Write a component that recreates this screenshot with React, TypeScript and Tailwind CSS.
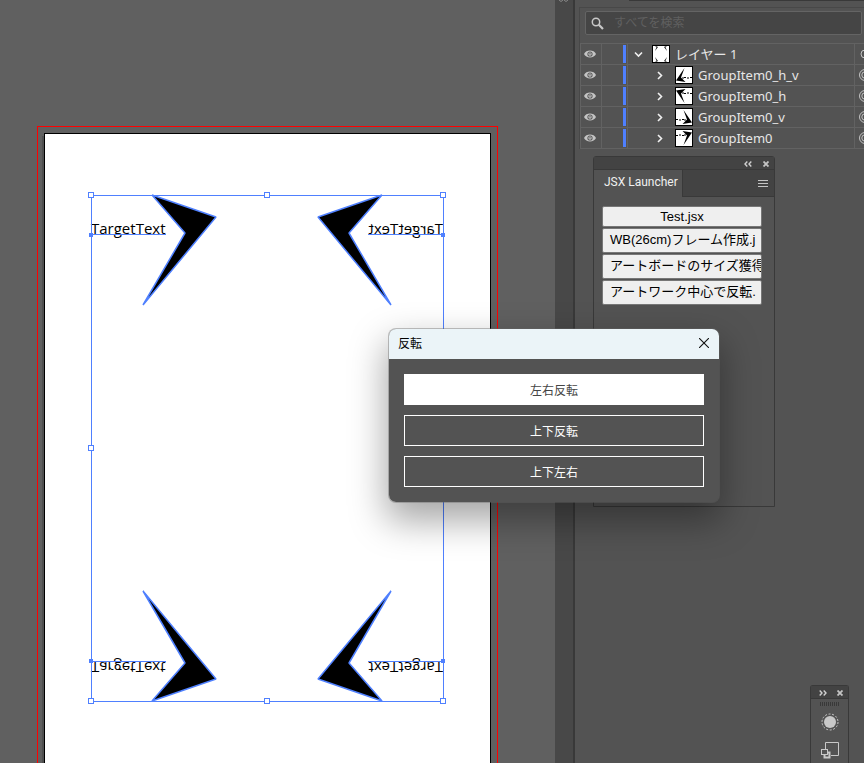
import React from "react";

const BLUE = "#4f80ff";
const ARROW = "152,195 216,217 143,305 185,233";

const orientations = [
  { id: "GroupItem0", transform: "matrix(1 0 0 1 0 0)" },
  { id: "GroupItem0_h", transform: "matrix(-1 0 0 1 534 0)" },
  { id: "GroupItem0_v", transform: "matrix(1 0 0 -1 0 896)" },
  { id: "GroupItem0_h_v", transform: "matrix(-1 0 0 -1 534 896)" },
];

const handles = [
  [91, 195], [267, 195], [443, 195],
  [91, 448], [443, 448],
  [91, 701], [267, 701], [443, 701],
];

function Artboard() {
  return (
    <svg width="554" height="900" className="block shrink-0" aria-label="Artboard">
      <rect x="37.5" y="126.5" width="460" height="900" fill="none" stroke="#ff0000" />
      <rect x="42" y="136" width="2" height="800" fill="#505050" />
      <rect x="44.5" y="133.5" width="446" height="900" fill="#fff" stroke="#000" />
      {orientations.map((o) => (
        <g key={o.id} transform={o.transform}>
          <polygon points={ARROW} fill="#000" stroke={BLUE} strokeWidth="1.500" strokeLinejoin="bevel" />
          <text x="91" y="234" fontSize="15" fill="#000" className="font-['Open_Sans',sans-serif]">
            TargetText
          </text>
          <rect x="91" y="234" width="75" height="1" fill={BLUE} />
          <rect x="89" y="233" width="4" height="4" fill={BLUE} />
        </g>
      ))}
      <rect x="91.5" y="195.5" width="352" height="506" fill="none" stroke={BLUE} />
      {handles.map(([x, y]) => (
        <rect key={`${x}-${y}`} x={x - 2.5} y={y - 2.5} width="5" height="5" fill="#fff" stroke={BLUE} />
      ))}
    </svg>
  );
}

function EyeIcon() {
  return (
    <svg width="12" height="8" viewBox="0 0 12 8">
      <path d="M0 4C2-.6 10-.6 12 4 10 8.600 2 8.600 0 4Z" fill="#c4c4c4" />
      <circle cx="6" cy="4" r="2.600" fill="#535353" />
      <circle cx="6" cy="4" r="1.700" fill="#c4c4c4" />
      <path d="M6 2.500v2" stroke="#535353" strokeWidth="1" />
    </svg>
  );
}

function Chevron({ open }: { open?: boolean }) {
  return (
    <svg width="9" height="9" viewBox="0 0 9 9" fill="none" stroke="#f0f0f0" strokeWidth="1.600">
      <path d={open ? "M1 2.500 4.500 6 8 2.500" : "M3 1 6.500 4.500 3 8"} />
    </svg>
  );
}

function Thumb({ kind }: { kind: string }) {
  const flips: Record<string, string> = {
    h_v: "matrix(-1 0 0 -1 18 18)",
    h: "matrix(-1 0 0 1 18 0)",
    v: "matrix(1 0 0 -1 0 18)",
    none: "matrix(1 0 0 1 0 0)",
  };
  return (
    <svg width="18" height="18" viewBox="0 0 18 18" className="shrink-0">
      <rect x=".5" y=".5" width="17" height="17" fill="#fff" stroke="#000" />
      {kind === "layer" ? (
        <path
          d="M3 1h1l2 1-3 4 1.500-4ZM15 1h-1l-2 1 3 4-1.500-4ZM3 17h1l2-1-3-4 1.500 4ZM15 17h-1l-2-1 3-4-1.500 4Z"
          fill="#222"
        />
      ) : (
        <g transform={flips[kind]}>
          <path d="M7.500 2 17 3.500 8.500 16 12 6.500Z" fill="#000" />
          <path d="M1 6.500h2M4 6h2M7 6.500h2M9 6h2" stroke="#000" strokeWidth="1" />
        </g>
      )}
    </svg>
  );
}

const layers = [
  { name: "レイヤー 1", kind: "layer" },
  { name: "GroupItem0_h_v", kind: "h_v" },
  { name: "GroupItem0_h", kind: "h" },
  { name: "GroupItem0_v", kind: "v" },
  { name: "GroupItem0", kind: "none" },
];

function LayerRow({ name, kind }: { name: string; kind: string }) {
  const top = kind === "layer";
  return (
    <li className="flex h-[21px] border-b border-[#626262]">
      <button aria-label={`${name} visibility`} className="flex w-5 shrink-0 justify-center pt-[6px] pr-[3px]">
        <EyeIcon />
      </button>
      <span className="flex w-[27px] shrink-0 justify-end border-x border-[#626262]">
        <span className="my-px mr-px w-[3px] bg-[#4f80ff]" />
      </span>
      <div className={`flex min-w-0 flex-1 items-center ${top ? "pl-[6px]" : "pl-[27px]"}`}>
        <button aria-label={`${name} toggle`} className="shrink-0">
          <Chevron open={top} />
        </button>
        <span className={`flex items-center gap-[5px] ${top ? "pl-[9px]" : "pl-[11px]"}`}>
          <Thumb kind={kind} />
          <span className="text-[13px] leading-5 whitespace-nowrap text-[#e6e6e6]">{name}</span>
        </span>
      </div>
      <button aria-label={`${name} target`} className="flex w-[10px] shrink-0 items-center overflow-hidden border-l border-[#626262] pl-[4px]">
        <svg width="12" height="12" viewBox="0 0 12 12" fill="none" stroke="#c4c4c4" className="shrink-0">
          <circle cx="6" cy="6" r={top ? 4 : 5.500} />
          {!top && <circle cx="6" cy="6" r="3.200" />}
        </svg>
      </button>
    </li>
  );
}

function DoubleChevron({ right }: { right?: boolean }) {
  return (
    <svg width="8" height="6" viewBox="0 0 8 6" fill="none" stroke="#d0d0d0" strokeWidth="1.400">
      <path d={right ? "M.7.5 3 3 .7 5.500M4.700.5 7 3 4.700 5.500" : "M7.300.5 5 3 7.300 5.500M3.300.5 1 3 3.300 5.500"} />
    </svg>
  );
}

function SmallCross() {
  return (
    <svg width="6" height="6" viewBox="0 0 6 6" stroke="#c4c4c4" strokeWidth="1.800">
      <path d="M.5.5l5 5M5.500.5l-5 5" />
    </svg>
  );
}

const scripts = ["WB(26cm)フレーム作成.j", "アートボードのサイズ獲得", "アートワーク中心で反転."];

function Launcher() {
  return (
    <section className="absolute top-[156px] left-[18px] h-[351px] w-[182px] rounded-t-[3px] border border-[#393939] bg-[#535353]">
      <header className="flex h-[13px] items-center justify-end gap-[11px] border-b border-[#393939] bg-[#434343] pt-px pr-[5px]">
        <button aria-label="Collapse"><DoubleChevron /></button>
        <button aria-label="Close panel"><SmallCross /></button>
      </header>
      <div className="flex h-[27px] items-stretch bg-[#434343]">
        <h2 className="w-[89px] border-r border-[#393939] bg-[#535353] pl-[10px] font-['Roboto',sans-serif] text-[12px] leading-6 whitespace-nowrap text-[#f0f0f0]">
          JSX Launcher
        </h2>
        <button aria-label="Panel menu" className="flex flex-1 items-center justify-end border-b border-[#393939] pr-[6px]">
          <svg width="10" height="7" stroke="#c4c4c4">
            <path d="M0 .5h10M0 3.500h10M0 6.500h10" />
          </svg>
        </button>
      </div>
      <div className="flex flex-col gap-px px-2 pt-[9px] pr-3 font-['Liberation_Sans','Noto_Sans_CJK_JP',sans-serif] text-[13px] text-black">
        <button className="h-[21px] w-40 rounded-[2px] border border-[#777] bg-[#efefef] leading-[19px]">Test.jsx</button>
        {scripts.map((s) => (
          <button
            key={s}
            className="flex h-[25px] w-40 items-start overflow-hidden rounded-[2px] border border-[#777] bg-[#efefef] pl-[7px] leading-[21px] whitespace-nowrap"
          >
            {s}
          </button>
        ))}
      </div>
    </section>
  );
}

function ToolDock() {
  return (
    <aside className="absolute right-[15px] bottom-0 h-[78px] w-[39px] rounded-t-[3px] border border-b-0 border-[#393939] bg-[#535353]">
      <header className="flex h-[13px] items-center justify-end gap-[10px] border-b border-[#393939] bg-[#434343] pt-px pr-[5px]">
        <button aria-label="Expand"><DoubleChevron right /></button>
        <button aria-label="Close dock"><SmallCross /></button>
      </header>
      <div className="flex flex-col items-center pl-px">
        <svg width="20" height="10" className="block" shapeRendering="crispEdges">
          <path d="M0 5h20" stroke="#393939" strokeWidth="4" strokeDasharray="1 1" />
        </svg>
        <button aria-label="Appearance" className="pt-[4px]">
          <svg width="18" height="18" viewBox="0 0 18 18" className="block">
            <circle cx="9" cy="9" r="6" fill="#c8c8c8" />
            <circle cx="9" cy="9" r="8" fill="none" stroke="#c8c8c8" strokeWidth="1" strokeDasharray="2 1.600" />
          </svg>
        </button>
        <button aria-label="Asset export" className="pt-[11px]">
          <svg width="18" height="18" viewBox="0 0 18 18" fill="none" stroke="#c8c8c8" className="block">
            <path d="M4.500 7V.5h13v13H10" />
            <rect x="3.500" y="10.500" width="5" height="5" strokeWidth="2" />
            <rect x=".5" y="7.500" width="6" height="5" fill="#535353" />
          </svg>
        </button>
      </div>
    </aside>
  );
}

function FlipDialog() {
  return (
    <div
      role="dialog"
      aria-label="反転"
      className="absolute top-[328px] left-[388px] w-[332px] overflow-hidden rounded-lg border border-[#666]/40 bg-[#535353] bg-clip-padding font-['Noto_Sans_CJK_JP',sans-serif] text-[12px] shadow-[0_16px_36px_2px_rgba(0,0,0,0.35)]"
    >
      <header className="flex h-[30px] items-center justify-between bg-[#ebf4f8] pr-[10px] pb-[2px] pl-[9px] text-black">
        <h1>反転</h1>
        <button aria-label="Close">
          <svg width="10" height="10" viewBox="0 0 10 10" stroke="#111" strokeWidth="1.100">
            <path d="M0 0l10 10M10 0 0 10" />
          </svg>
        </button>
      </header>
      <div className="flex flex-col gap-[10px] p-[15px]">
        <button className="h-[31px] border border-white bg-white text-[#444]">左右反転</button>
        <button className="h-[31px] border border-white text-white">上下反転</button>
        <button className="h-[31px] border border-white text-white">上下左右</button>
      </div>
    </div>
  );
}

export default function App() {
  return (
    <main className="relative flex h-screen overflow-hidden bg-[#535353] font-['Noto_Sans','Noto_Sans_CJK_JP',sans-serif]">
      <section className="min-w-0 flex-1 overflow-hidden bg-[#606060]">
        <Artboard />
      </section>
      <div className="flex w-[18px] shrink-0 justify-center bg-[#484848]">
        <svg width="10" height="3" fill="none" stroke="#888">
          <path d="M0 0l2 1.500L4 0M5 0l2 1.500L9 0" />
        </svg>
      </div>
      <div className="w-[2px] shrink-0 bg-[#393939]" />
      <aside className="relative w-[289px] shrink-0">
        <div className="ml-[54px] h-px bg-[#393939]" />
        <div className="mt-[6px] ml-1 border-t border-l border-[#484848]">
          <div className="h-[35px] pt-[3px] pr-[2px] pl-[5px]">
            <label className="flex h-6 items-center gap-[10px] rounded-[2px] border border-[#646464] bg-[#454545] pl-[5px]">
              <svg width="13" height="13" viewBox="0 0 13 13" fill="none" stroke="#c8c8c8" className="shrink-0">
                <circle cx="5" cy="5" r="3.700" strokeWidth="1.500" />
                <path d="M7.800 7.800 12 12" strokeWidth="2.200" />
              </svg>
              <input
                aria-label="すべてを検索"
                placeholder="すべてを検索"
                className="min-w-0 flex-1 bg-transparent text-[12px] text-[#ddd] outline-none placeholder:text-[#606060]"
              />
            </label>
          </div>
          <ul className="border-t border-l border-[#626262]">
            {layers.map((l) => (
              <LayerRow key={l.name} {...l} />
            ))}
          </ul>
        </div>
        <Launcher />
        <ToolDock />
      </aside>
      <FlipDialog />
    </main>
  );
}
